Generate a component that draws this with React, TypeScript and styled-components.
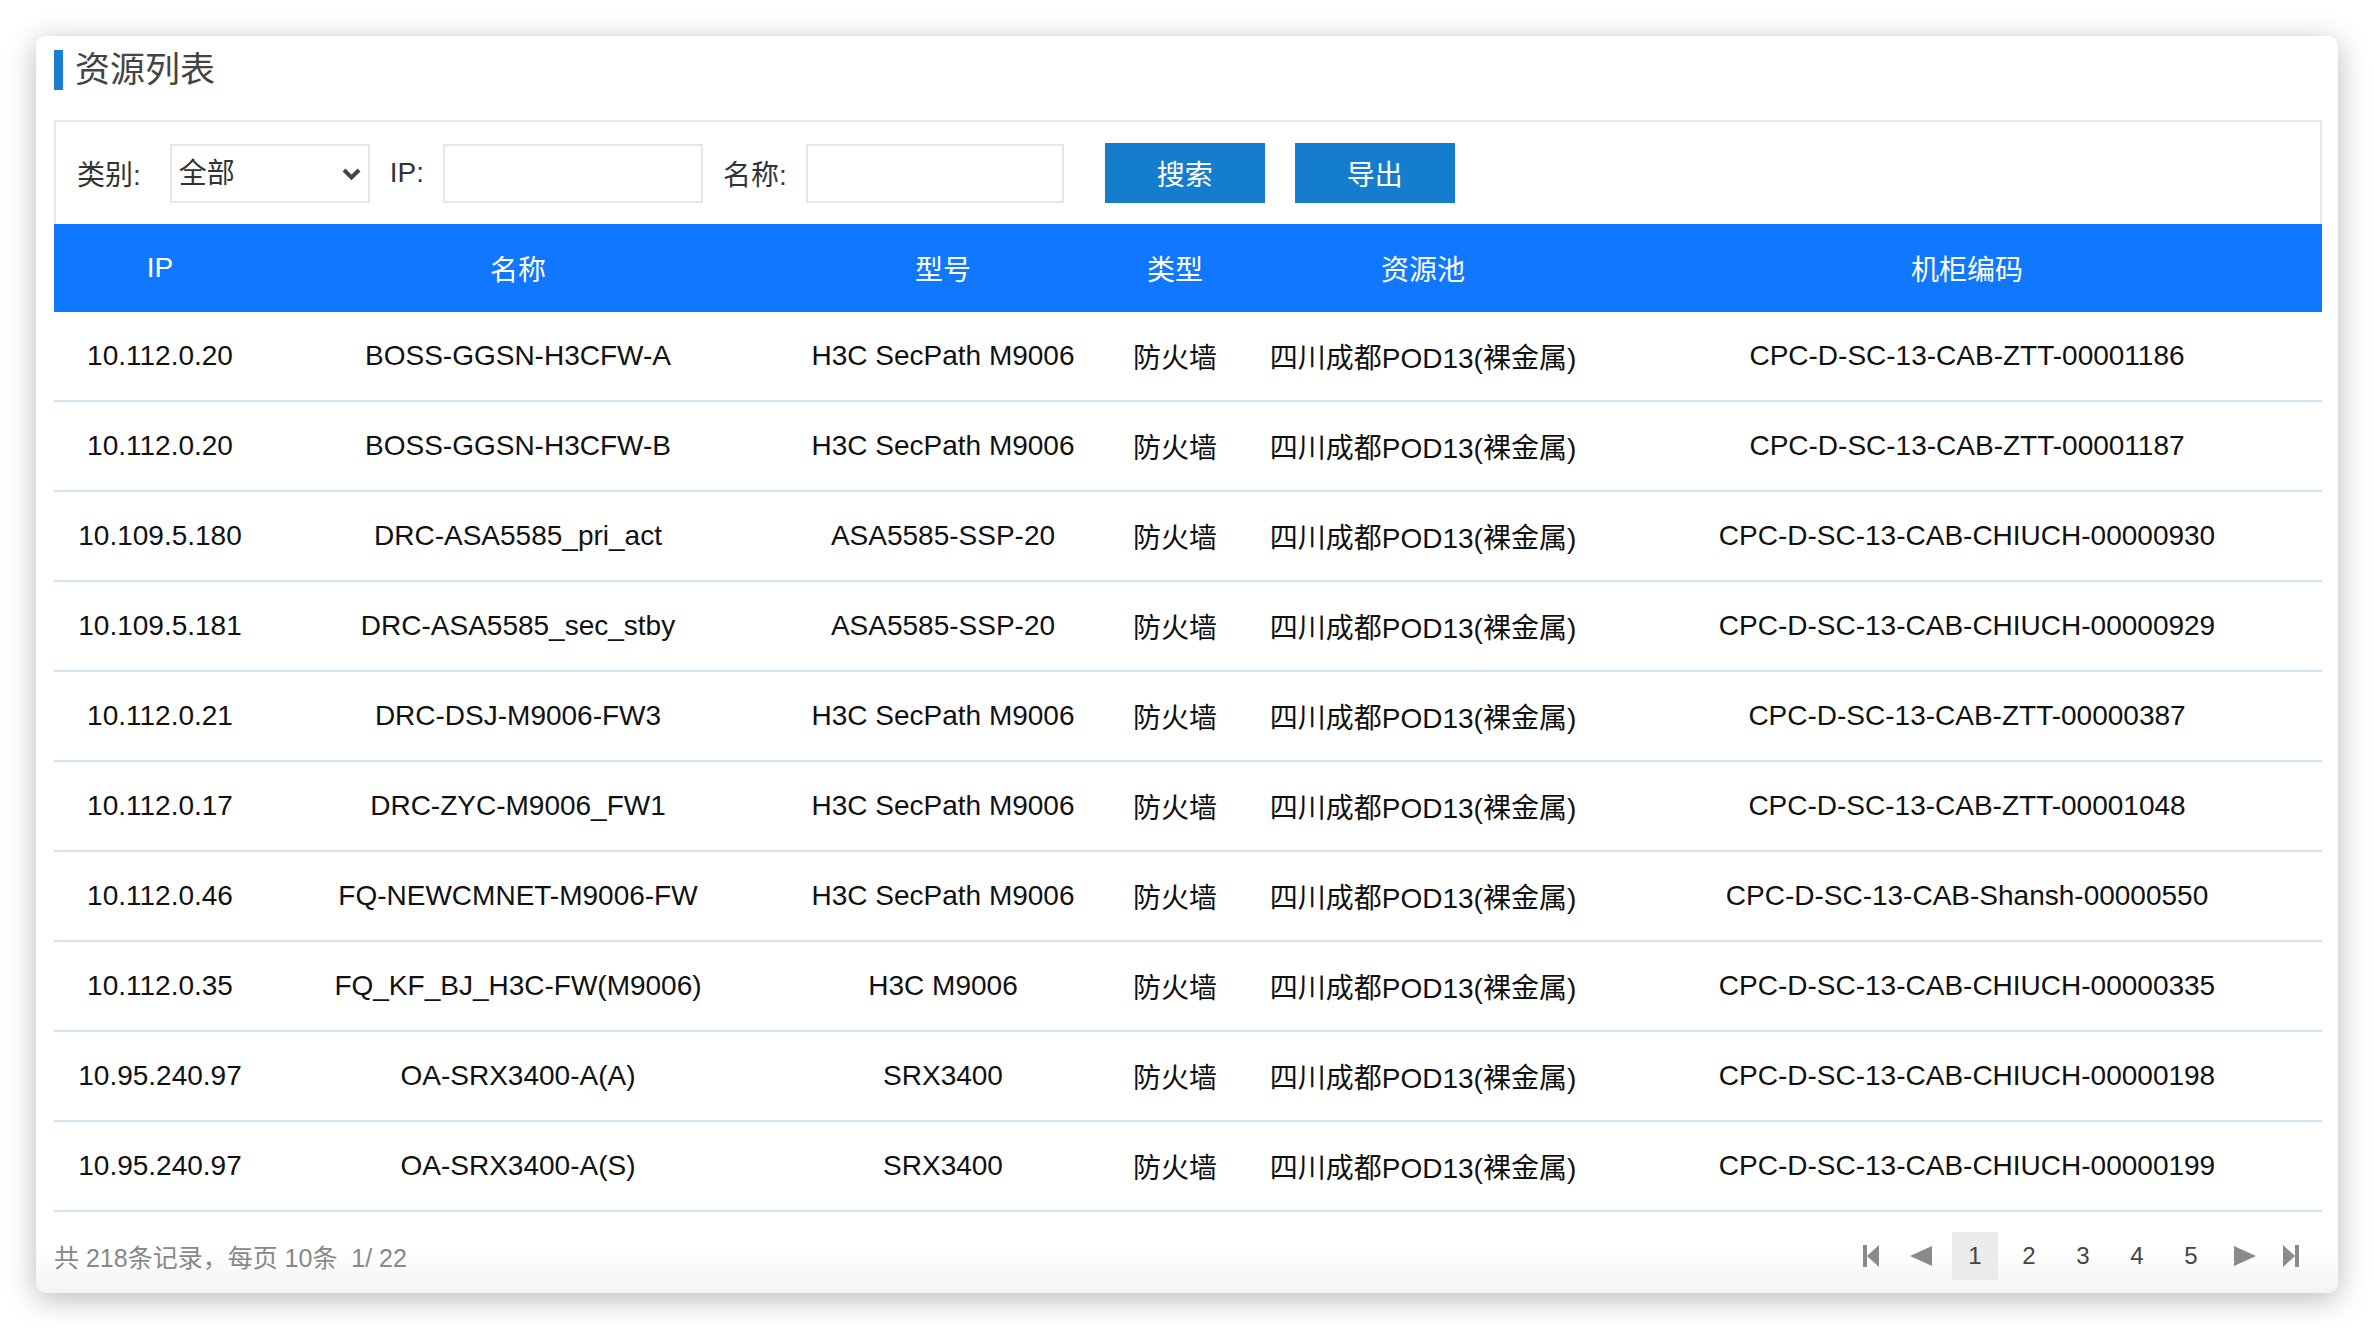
import React from "react";
import styled, { createGlobalStyle } from "styled-components";

type Resource = {
  ip: string;
  name: string;
  model: string;
  kind: string;
  pool: string;
  cabinet: string;
};

const POOL = "四川成都POD13(裸金属)";

const rows: Resource[] = [
  { ip: "10.112.0.20", name: "BOSS-GGSN-H3CFW-A", model: "H3C SecPath M9006", kind: "防火墙", pool: POOL, cabinet: "CPC-D-SC-13-CAB-ZTT-00001186" },
  { ip: "10.112.0.20", name: "BOSS-GGSN-H3CFW-B", model: "H3C SecPath M9006", kind: "防火墙", pool: POOL, cabinet: "CPC-D-SC-13-CAB-ZTT-00001187" },
  { ip: "10.109.5.180", name: "DRC-ASA5585_pri_act", model: "ASA5585-SSP-20", kind: "防火墙", pool: POOL, cabinet: "CPC-D-SC-13-CAB-CHIUCH-00000930" },
  { ip: "10.109.5.181", name: "DRC-ASA5585_sec_stby", model: "ASA5585-SSP-20", kind: "防火墙", pool: POOL, cabinet: "CPC-D-SC-13-CAB-CHIUCH-00000929" },
  { ip: "10.112.0.21", name: "DRC-DSJ-M9006-FW3", model: "H3C SecPath M9006", kind: "防火墙", pool: POOL, cabinet: "CPC-D-SC-13-CAB-ZTT-00000387" },
  { ip: "10.112.0.17", name: "DRC-ZYC-M9006_FW1", model: "H3C SecPath M9006", kind: "防火墙", pool: POOL, cabinet: "CPC-D-SC-13-CAB-ZTT-00001048" },
  { ip: "10.112.0.46", name: "FQ-NEWCMNET-M9006-FW", model: "H3C SecPath M9006", kind: "防火墙", pool: POOL, cabinet: "CPC-D-SC-13-CAB-Shansh-00000550" },
  { ip: "10.112.0.35", name: "FQ_KF_BJ_H3C-FW(M9006)", model: "H3C M9006", kind: "防火墙", pool: POOL, cabinet: "CPC-D-SC-13-CAB-CHIUCH-00000335" },
  { ip: "10.95.240.97", name: "OA-SRX3400-A(A)", model: "SRX3400", kind: "防火墙", pool: POOL, cabinet: "CPC-D-SC-13-CAB-CHIUCH-00000198" },
  { ip: "10.95.240.97", name: "OA-SRX3400-A(S)", model: "SRX3400", kind: "防火墙", pool: POOL, cabinet: "CPC-D-SC-13-CAB-CHIUCH-00000199" },
];

const columns = [
  { title: "IP", width: 212 },
  { title: "名称", width: 504 },
  { title: "型号", width: 346 },
  { title: "类型", width: 118 },
  { title: "资源池", width: 378 },
  { title: "机柜编码", width: 710 },
];

const GlobalStyle = createGlobalStyle`
  html, body {
    margin: 0;
    background: #ffffff;
    font-family: "Liberation Sans", "Noto Sans CJK SC", sans-serif;
  }
`;

const Page = styled.div`
  padding: 36px;
`;

const Card = styled.section`
  width: 2302px;
  height: 1257px;
  box-sizing: border-box;
  padding: 14px 16px 0 18px;
  border-radius: 10px;
  background: linear-gradient(180deg, #ffffff calc(100% - 44px), #f3f3f3 100%);
  box-shadow: 0 6px 30px rgba(0, 0, 0, 0.28);
`;

const TitleRow = styled.h2`
  display: flex;
  align-items: center;
  height: 40px;
  margin: 0;
  font-size: 35px;
  font-weight: normal;
  color: #444444;
  line-height: 40px;

  &::before {
    content: "";
    width: 9px;
    height: 40px;
    margin-right: 12px;
    background: #1a7dd0;
  }
`;

const FilterBar = styled.form`
  display: flex;
  align-items: center;
  height: 104px;
  box-sizing: border-box;
  margin-top: 30px;
  padding-left: 21px;
  border: 2px solid #e8e8e8;
  border-bottom: none;
`;

const Label = styled.label`
  margin: 0 19px 0 20px;
  font-size: 28px;
  color: #333333;
  white-space: nowrap;

  &:first-child {
    margin: 0 29px 0 0;
  }
`;

const SelectWrap = styled.div`
  position: relative;
  width: 200px;
  height: 59px;
`;

const Select = styled.select`
  appearance: none;
  width: 100%;
  height: 100%;
  padding: 0 0 0 7px;
  border: 2px solid #e6e6e6;
  border-radius: 0;
  background: #ffffff;
  font-family: inherit;
  font-size: 28px;
  color: #333333;
  outline: none;
`;

const Chevron = styled.svg`
  position: absolute;
  right: 9px;
  top: 24px;
  pointer-events: none;
`;

const TextInput = styled.input<{ $width: number }>`
  width: ${({ $width }) => $width}px;
  height: 59px;
  box-sizing: border-box;
  border: 2px solid #e6e6e6;
  font-family: inherit;
  font-size: 28px;
  outline: none;
`;

const Button = styled.button<{ $gap: number }>`
  width: 160px;
  height: 60px;
  margin-left: ${({ $gap }) => $gap}px;
  border: none;
  background: #157dce;
  color: #ffffff;
  font-family: inherit;
  font-size: 28px;
  cursor: pointer;
`;

const Table = styled.table`
  width: 2268px;
  border-collapse: collapse;
  table-layout: fixed;
`;

const HeadCell = styled.th`
  height: 88px;
  padding: 0;
  background: #1078ff;
  color: #ffffff;
  font-size: 28px;
  font-weight: normal;
  text-align: center;
`;

const BodyRow = styled.tr`
  border-bottom: 2px solid #d4e3f2;
`;

const Cell = styled.td`
  height: 88px;
  padding: 0;
  font-size: 28px;
  color: #111111;
  text-align: center;
  white-space: nowrap;
`;

const Footer = styled.div`
  display: flex;
  align-items: center;
  justify-content: space-between;
  padding: 20px 0 13px;
`;

const Summary = styled.span`
  font-size: 25px;
  color: #888888;
  white-space: pre;
`;

const Pager = styled.nav`
  display: flex;
  gap: 8px;
  margin-right: 10px;
`;

const PageItem = styled.span<{ $active?: boolean; $narrow?: boolean }>`
  display: flex;
  align-items: center;
  justify-content: center;
  width: ${({ $narrow }) => ($narrow ? 36 : 46)}px;
  height: 48px;
  background: ${({ $active }) => ($active ? "#ebebeb" : "transparent")};
  font-size: 24px;
  color: #444444;
`;

const PagerIcon = styled.svg`
  filter: blur(0.5px);
`;

type Dir = "first" | "prev" | "next" | "last";

const ArrowIcon = ({ dir }: { dir: Dir }) => {
  const shapes: Record<Dir, React.ReactNode> = {
    first: (
      <>
        <rect x="2" y="0" width="4" height="22" />
        <polygon points="18,0 18,22 6,11" />
      </>
    ),
    prev: <polygon points="22,1 22,21 0,11" />,
    next: <polygon points="0,1 0,21 22,11" />,
    last: (
      <>
        <polygon points="0,0 0,22 12,11" />
        <rect x="12" y="0" width="4" height="22" />
      </>
    ),
  };
  return (
    <PagerIcon width="22" height="22" viewBox="0 0 22 22" fill="#8a8a8a">
      {shapes[dir]}
    </PagerIcon>
  );
};

export default function App() {
  return (
    <Page>
      <GlobalStyle />
      <Card>
        <TitleRow>资源列表</TitleRow>
        <FilterBar onSubmit={(e) => e.preventDefault()}>
          <Label>类别:</Label>
          <SelectWrap>
            <Select defaultValue="all">
              <option value="all">全部</option>
              <option value="fw">防火墙</option>
            </Select>
            <Chevron width="19" height="12" viewBox="0 0 19 12">
              <path d="M2 2 L9.5 9.5 L17 2" fill="none" stroke="#444" strokeWidth="4" />
            </Chevron>
          </SelectWrap>
          <Label>IP:</Label>
          <TextInput $width={260} />
          <Label>名称:</Label>
          <TextInput $width={258} />
          <Button type="submit" $gap={41}>搜索</Button>
          <Button type="button" $gap={30}>导出</Button>
        </FilterBar>
        <Table>
          <colgroup>
            {columns.map((c) => (
              <col key={c.title} style={{ width: c.width }} />
            ))}
          </colgroup>
          <thead>
            <tr>
              {columns.map((c) => (
                <HeadCell key={c.title}>{c.title}</HeadCell>
              ))}
            </tr>
          </thead>
          <tbody>
            {rows.map((r, i) => (
              <BodyRow key={i}>
                <Cell>{r.ip}</Cell>
                <Cell>{r.name}</Cell>
                <Cell>{r.model}</Cell>
                <Cell>{r.kind}</Cell>
                <Cell>{r.pool}</Cell>
                <Cell>{r.cabinet}</Cell>
              </BodyRow>
            ))}
          </tbody>
        </Table>
        <Footer>
          <Summary>共 218条记录，每页 10条  1/ 22</Summary>
          <Pager>
            <PageItem $narrow><ArrowIcon dir="first" /></PageItem>
            <PageItem><ArrowIcon dir="prev" /></PageItem>
            {[1, 2, 3, 4, 5].map((n) => (
              <PageItem key={n} $active={n === 1}>{n}</PageItem>
            ))}
            <PageItem><ArrowIcon dir="next" /></PageItem>
            <PageItem $narrow><ArrowIcon dir="last" /></PageItem>
          </Pager>
        </Footer>
      </Card>
    </Page>
  );
}
